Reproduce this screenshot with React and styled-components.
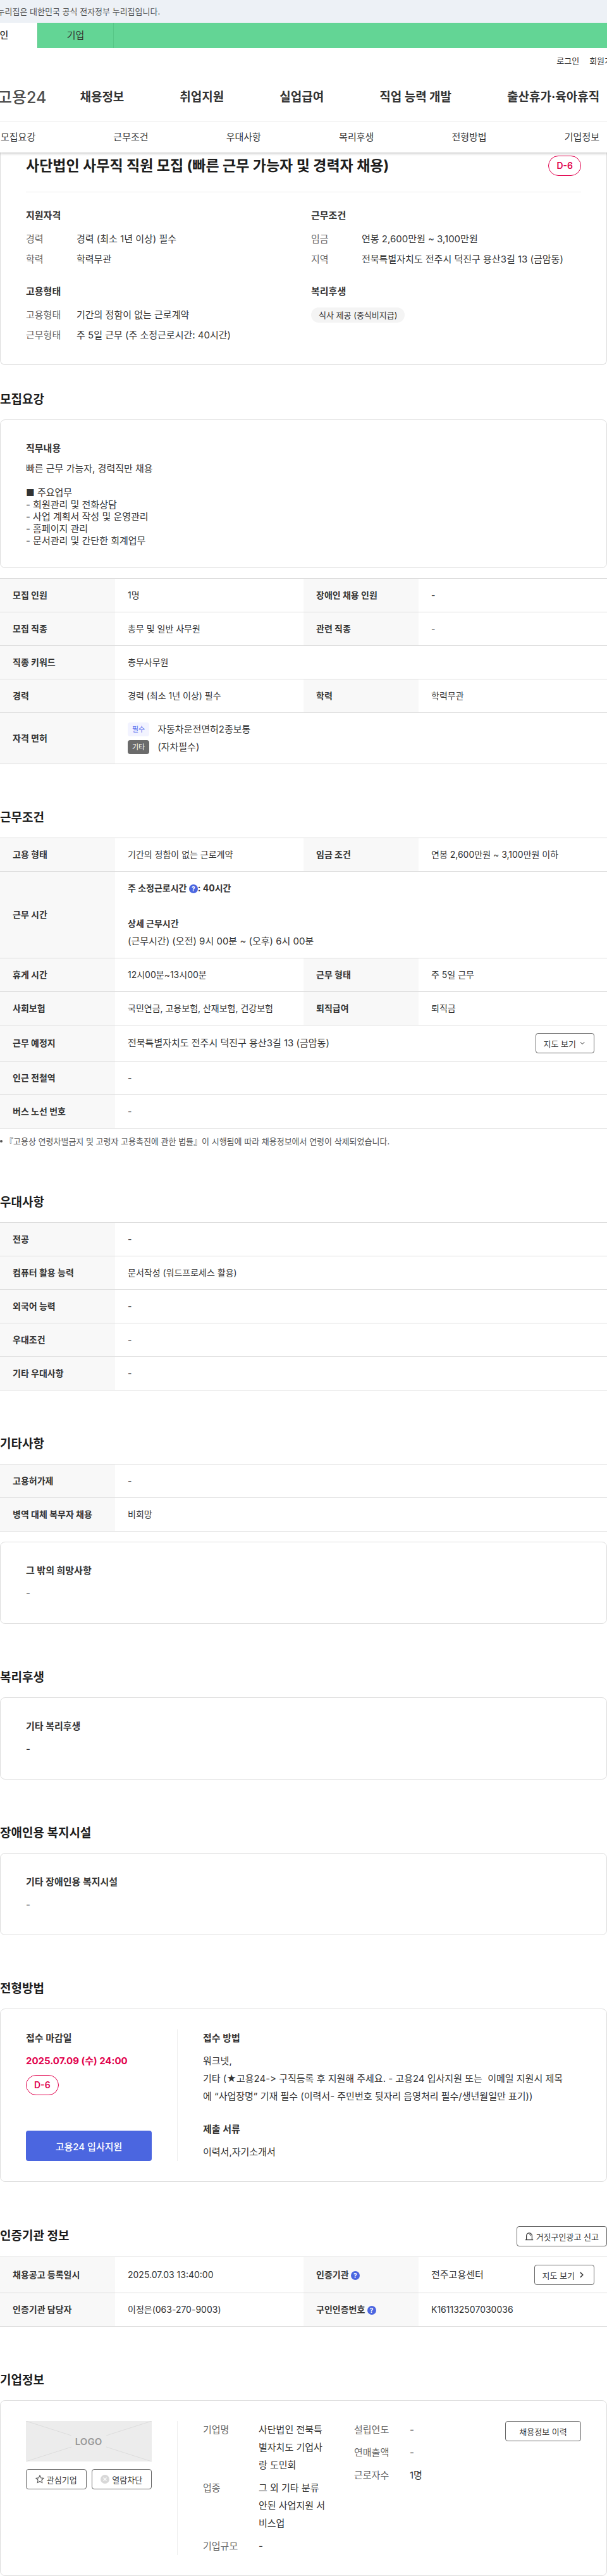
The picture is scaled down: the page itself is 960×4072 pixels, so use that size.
import * as React from "react"
import styled, { createGlobalStyle } from "styled-components";
import { ChevronDown, ChevronRight } from "lucide-react";

const topMenus = ["채용정보", "취업지원", "실업급여", "직업 능력 개발", "출산휴가·육아휴직"];
const anchors = ["모집요강", "근무조건", "우대사항", "복리후생", "전형방법", "기업정보"];

const jobText = `빠른 근무 가능자, 경력직만 채용

■ 주요업무
- 회원관리 및 전화상담
- 사업 계획서 작성 및 운영관리
- 홈페이지 관리
- 문서관리 및 간단한 회계업무`;

const applyText = `워크넷,
기타 (★고용24-> 구직등록 후 지원해 주세요. - 고용24 입사지원 또는  이메일 지원시 제목
에 “사업장명” 기재 필수 (이력서- 주민번호 뒷자리 음영처리 필수/생년월일만 표기))`;

const HelpIcon = () => (
    <HelpButton type="button" aria-label="도움말">?</HelpButton>
);

const SirenIcon = () => (
    <svg width="14" height="14" viewBox="0 0 14 14" fill="none" stroke="#333" strokeWidth="1.2">
        <path d="M2.6 12V6.2a4.4 4.4 0 0 1 8.8 0V12" />
        <path d="M0.8 12.6h12.4" />
        <path d="M7.4 4.2a2 2 0 0 1 1.6 2" />
    </svg>
);

const StarIcon = () => (
    <svg width="14" height="14" viewBox="0 0 14 14" fill="none" stroke="#555" strokeWidth="1.1">
        <path d="M7 1l1.8 3.9 4.2.5-3.1 2.9.8 4.2L7 10.4l-3.7 2.1.8-4.2L1 5.4l4.2-.5z" />
    </svg>
);

const BlockIcon = () => (
    <svg width="14" height="14" viewBox="0 0 14 14">
        <circle cx="7" cy="7" r="7" fill="#d8d8d8" />
        <path d="M4.5 4.5l5 5M9.5 4.5l-5 5" stroke="#fff" strokeWidth="1.2" />
    </svg>
);

const InfoTable = ({ rows }) => (
    <Table>
        <colgroup>
            <col className="head" />
            <col />
            <col className="head" />
            <col />
        </colgroup>
        <tbody>
            {rows.map((cells, i) => (
                <tr key={i}>
                    {cells.map(([label, value], j) => (
                        <React.Fragment key={j}>
                            <th scope="row">{label}</th>
                            <td colSpan={cells.length === 1 ? 3 : 1}>{value}</td>
                        </React.Fragment>
                    ))}
                </tr>
            ))}
        </tbody>
    </Table>
);

const Section = ({ title, action, first, children }) => (
    <SectionWrap $first={first}>
        <SectionHead>
            <h2>{title}</h2>
            {action}
        </SectionHead>
        {children}
    </SectionWrap>
);

const SummaryGroup = ({ title, items, children }) => (
    <div>
        <CardTitle $gap={13}>{title}</CardTitle>
        {items && (
            <SummaryList>
                {items.map(([label, value]) => (
                    <div key={label}>
                        <dt>{label}</dt>
                        <dd>{value}</dd>
                    </div>
                ))}
            </SummaryList>
        )}
        {children}
    </div>
);

const NoteCard = ({ title }) => (
    <Card>
        <CardTitle $gap={10}>{title}</CardTitle>
        <Paragraph>-</Paragraph>
    </Card>
);

const CompanyColumn = ({ items }) => (
    <CompanyList>
        {items.map(([label, value]) => (
            <div key={label}>
                <dt>{label}</dt>
                <dd>{value}</dd>
            </div>
        ))}
    </CompanyList>
);

const App = () => (
    <>
        <GlobalStyle />
        <Header>
            <GovBar>
                <svg width="32" height="16" viewBox="0 0 32 16">
                    <rect width="24" height="16" fill="#fff" />
                    <path d="M8 8a4 4 0 0 1 8 0" fill="#cd2e3a" />
                    <path d="M8 8a4 4 0 0 0 8 0" fill="#0047a0" />
                </svg>
                <span>이 누리집은 대한민국 공식 전자정부 누리집입니다.</span>
            </GovBar>
            <UserTabs>
                <UserTab href="#personal" $active>개인</UserTab>
                <UserTab href="#company">기업</UserTab>
            </UserTabs>
            <UtilLinks>
                <a href="#login">로그인</a>
                <a href="#join">회원가입</a>
            </UtilLinks>
            <MainNav>
                <Logo href="#home">
                    <svg width="48" height="32" viewBox="0 0 48 32">
                        <circle cx="16" cy="16" r="12" fill="none" stroke="#63d595" strokeWidth="5" />
                    </svg>
                    고용24
                </Logo>
                <ul>
                    {topMenus.map((menu) => (
                        <li key={menu}><a href="#menu">{menu}</a></li>
                    ))}
                </ul>
            </MainNav>
            <AnchorNav>
                {anchors.map((name) => (
                    <a key={name} href={`#${name}`}>{name}</a>
                ))}
            </AnchorNav>
        </Header>

        <main>
            <SummaryCard>
                <SummaryTop>
                    <h1>사단법인 사무직 직원 모집 (빠른 근무 가능자 및 경력자 채용)</h1>
                    <DayBadge>D-6</DayBadge>
                </SummaryTop>
                <SummaryGrid>
                    <SummaryGroup title="지원자격" items={[
                        ["경력", "경력 (최소 1년 이상) 필수"],
                        ["학력", "학력무관"],
                    ]} />
                    <SummaryGroup title="근무조건" items={[
                        ["임금", "연봉 2,600만원 ~ 3,100만원"],
                        ["지역", "전북특별자치도 전주시 덕진구 용산3길 13 (금암동)"],
                    ]} />
                    <SummaryGroup title="고용형태" items={[
                        ["고용형태", "기간의 정함이 없는 근로계약"],
                        ["근무형태", "주 5일 근무 (주 소정근로시간: 40시간)"],
                    ]} />
                    <SummaryGroup title="복리후생">
                        <Tag>식사 제공 (중식비지급)</Tag>
                    </SummaryGroup>
                </SummaryGrid>
            </SummaryCard>

            <Section title="모집요강" first>
                <Card>
                    <CardTitle $gap={10}>직무내용</CardTitle>
                    <JobText>{jobText}</JobText>
                </Card>
                <InfoTable rows={[
                    [["모집 인원", "1명"], ["장애인 채용 인원", "-"]],
                    [["모집 직종", "총무 및 일반 사무원"], ["관련 직종", "-"]],
                    [["직종 키워드", "총무사무원"]],
                    [["경력", "경력 (최소 1년 이상) 필수"], ["학력", "학력무관"]],
                    [["자격 면허", (
                        <>
                            <License><Flag>필수</Flag>자동차운전면허2종보통</License>
                            <License><Flag $dark>기타</Flag>(자차필수)</License>
                        </>
                    )]],
                ]} />
            </Section>

            <Section title="근무조건">
                <InfoTable rows={[
                    [["고용 형태", "기간의 정함이 없는 근로계약"], ["임금 조건", "연봉 2,600만원 ~ 3,100만원 이하"]],
                    [["근무 시간", (
                        <>
                            <HoursTitle>주 소정근로시간 <HelpIcon />: 40시간</HoursTitle>
                            <br />
                            <HoursTitle>상세 근무시간</HoursTitle>
                            <Paragraph>(근무시간) (오전) 9시 00분 ~ (오후) 6시 00분</Paragraph>
                        </>
                    )]],
                    [["휴게 시간", "12시00분~13시00분"], ["근무 형태", "주 5일 근무"]],
                    [["사회보험", "국민연금, 고용보험, 산재보험, 건강보험"], ["퇴직급여", "퇴직금"]],
                    [["근무 예정지", (
                        <CellRow>
                            전북특별자치도 전주시 덕진구 용산3길 13 (금암동)
                            <LineButton type="button">지도 보기<ChevronDown size={12} /></LineButton>
                        </CellRow>
                    )]],
                    [["인근 전철역", "-"]],
                    [["버스 노선 번호", "-"]],
                ]} />
                <Note>『고용상 연령차별금지 및 고령자 고용촉진에 관한 법률』이 시행됨에 따라 채용정보에서 연령이 삭제되었습니다.</Note>
            </Section>

            <Section title="우대사항">
                <InfoTable rows={[
                    [["전공", "-"]],
                    [["컴퓨터 활용 능력", "문서작성 (워드프로세스 활용)"]],
                    [["외국어 능력", "-"]],
                    [["우대조건", "-"]],
                    [["기타 우대사항", "-"]],
                ]} />
            </Section>

            <Section title="기타사항">
                <InfoTable rows={[
                    [["고용허가제", "-"]],
                    [["병역 대체 복무자 채용", "비희망"]],
                ]} />
                <NoteCard title="그 밖의 희망사항" />
            </Section>

            <Section title="복리후생">
                <NoteCard title="기타 복리후생" />
            </Section>

            <Section title="장애인용 복지시설">
                <NoteCard title="기타 장애인용 복지시설" />
            </Section>

            <Section title="전형방법">
                <SplitCard>
                    <Side>
                        <BlockTitle>접수 마감일</BlockTitle>
                        <Deadline>2025.07.09 (수) 24:00</Deadline>
                        <DayBadge>D-6</DayBadge>
                        <ApplyButton type="button">고용24 입사지원</ApplyButton>
                    </Side>
                    <Body>
                        <BlockTitle>접수 방법</BlockTitle>
                        <Paragraph>{applyText}</Paragraph>
                        <BlockTitle $spaced>제출 서류</BlockTitle>
                        <Paragraph>이력서,자기소개서</Paragraph>
                    </Body>
                </SplitCard>
            </Section>

            <Section
                title="인증기관 정보"
                action={<LineButton type="button"><SirenIcon />거짓구인광고 신고</LineButton>}
            >
                <InfoTable rows={[
                    [["채용공고 등록일시", "2025.07.03 13:40:00"], [<>인증기관 <HelpIcon /></>, (
                        <CellRow>
                            전주고용센터
                            <LineButton type="button">지도 보기<ChevronRight size={14} strokeWidth={3} /></LineButton>
                        </CellRow>
                    )]],
                    [["인증기관 담당자", "이정은(063-270-9003)"], [<>구인인증번호 <HelpIcon /></>, "K161132507030036"]],
                ]} />
            </Section>

            <Section title="기업정보">
                <SplitCard>
                    <Side>
                        <CompanyLogo viewBox="0 0 199 64" preserveAspectRatio="none">
                            <rect width="199" height="64" fill="#ececec" />
                            <path d="M0 0l72 23M199 0l-72 23M0 64l72-23M199 64l-72-23" stroke="#dcdcdc" />
                            <text x="99" y="38" textAnchor="middle">LOGO</text>
                        </CompanyLogo>
                        <ButtonPair>
                            <LineButton type="button"><StarIcon />관심기업</LineButton>
                            <LineButton type="button"><BlockIcon />열람차단</LineButton>
                        </ButtonPair>
                    </Side>
                    <CompanyBody>
                        <CompanyColumn items={[
                            ["기업명", "사단법인 전북특별자치도 기업사랑 도민회"],
                            ["업종", "그 외 기타 분류 안된 사업지원 서비스업"],
                            ["기업규모", "-"],
                        ]} />
                        <CompanyColumn items={[
                            ["설립연도", "-"],
                            ["연매출액", "-"],
                            ["근로자수", "1명"],
                        ]} />
                        <LineButton type="button">채용정보 이력</LineButton>
                    </CompanyBody>
                </SplitCard>
            </Section>
        </main>
    </>
);

export default App

const GlobalStyle = createGlobalStyle`
  * {
    box-sizing: border-box;
  }

  body {
    margin: 0;
    background: #fff;
    color: #333;
    font-family: Inter, "Noto Sans CJK KR", sans-serif;
    font-size: 15px;
    line-height: 24px;
    overflow-x: hidden;
  }

  h1, h2, h3, p, ul, dl, dd {
    margin: 0;
    padding: 0;
  }

  a {
    color: inherit;
    text-decoration: none;
  }

  button {
    font-family: inherit;
    color: inherit;
    cursor: pointer;
  }
`

const Header = styled.header`
  position: relative;
  z-index: 1;
  background: #fff;
  box-shadow: 0 2px 4px rgba(0, 0, 0, 0.2);
`

const GovBar = styled.div`
  display: flex;
  align-items: center;
  gap: 8px;
  height: 36px;
  margin-left: -60px;
  background: #edf1f6;
  color: #555;
  font-size: 13px;
`

const UserTabs = styled.div`
  display: flex;
  height: 40px;
  margin-left: -60px;
  background: #63d595;
`

const UserTab = styled.a`
  display: flex;
  align-items: center;
  justify-content: center;
  width: 120px;
  border-right: 1px solid #57c787;
  background: ${(props) => (props.$active ? "#fff" : "transparent")};
  font-weight: ${(props) => (props.$active ? 500 : 400)};
`

const UtilLinks = styled.div`
  display: flex;
  justify-content: flex-end;
  gap: 16px;
  margin-right: -20px;
  padding: 8px 0;
  font-size: 13px;
`

const MainNav = styled.nav`
  display: flex;
  align-items: center;
  height: 77px;
  margin-left: -60px;
  padding-bottom: 1px;
  border-bottom: 1px solid #eee;

  ul {
    display: flex;
    gap: 88px;
    margin-left: 53px;
    list-style: none;
    font-size: 19px;
    font-weight: 700;
    white-space: nowrap;
  }
`

const Logo = styled.a`
  display: flex;
  align-items: center;
  gap: 8px;
  color: #4d4d4d;
  font-size: 25px;
  font-weight: 500;
`

const AnchorNav = styled.nav`
  display: flex;
  justify-content: space-between;
  align-items: center;
  height: 48px;
  padding: 0 12px 0 1px;
`

const Card = styled.div`
  padding: 33px 40px;
  border: 1px solid #ddd;
  border-radius: 8px;
`

const SummaryCard = styled(Card)`
  padding-top: 5px;
  padding-bottom: 34px;
  border-top: 0;
  border-radius: 0 0 8px 8px;
`

const SummaryTop = styled.div`
  display: flex;
  justify-content: space-between;
  align-items: center;
  padding-bottom: 25px;
  border-bottom: 1px solid #eee;

  h1 {
    color: #1d1d1d;
    font-size: 23px;
    line-height: 32px;
  }
`

const DayBadge = styled.span`
  display: inline-flex;
  align-items: center;
  align-self: flex-start;
  height: 32px;
  padding: 0 12px;
  border: 1px solid #e1004c;
  border-radius: 16px;
  color: #e1004c;
  font-size: 14px;
  font-weight: 600;
`

const SummaryGrid = styled.div`
  display: grid;
  grid-template-columns: 1fr 1fr;
  gap: 27px 24px;
  padding-top: 25px;
`

const CardTitle = styled.h3`
  margin-bottom: ${(props) => props.$gap}px;
  font-size: 15px;
  font-weight: 700;
`

const SummaryList = styled.dl`
  display: grid;
  gap: 8px;

  div {
    display: flex;
  }

  dt {
    width: 80px;
    color: #666;
  }
`

const Tag = styled.span`
  display: inline-block;
  padding: 0 12px;
  border-radius: 12px;
  background: #f4f4f4;
  font-size: 13px;
`

const SectionWrap = styled.section`
  margin-top: ${(props) => (props.$first ? 40 : 70)}px;
`

const SectionHead = styled.div`
  display: flex;
  justify-content: space-between;
  align-items: center;
  margin-bottom: 16px;

  h2 {
    color: #1d1d1d;
    font-size: 19px;
    line-height: 30px;
  }
`

const JobText = styled.p`
  line-height: 19px;
  white-space: pre-line;
`

const Paragraph = styled.p`
  font-size: 15px;
  line-height: 28px;
  white-space: pre-wrap;
`

const Table = styled.table`
  width: 100%;
  border-top: 1px solid #ddd;
  border-spacing: 0;
  table-layout: fixed;
  font-size: 14px;
  line-height: 28px;

  ${Card} + & {
    margin-top: 16px;
  }

  & + ${Card} {
    margin-top: 16px;
  }

  .head {
    width: 182px;
  }

  th, td {
    padding: 12px 20px;
    border-bottom: 1px solid #ddd;
    text-align: left;
    vertical-align: middle;
  }

  th {
    background: #f8f8f8;
    font-weight: 700;
    white-space: nowrap;
  }
`

const License = styled.div`
  display: flex;
  align-items: center;
  gap: 13px;
  font-size: 15px;
`

const Flag = styled.span`
  padding: 0 7px;
  border-radius: 4px;
  background: ${(props) => (props.$dark ? "#6b6b6b" : "#f2f3ff")};
  color: ${(props) => (props.$dark ? "#fff" : "#5c70ee")};
  font-size: 11px;
  line-height: 22px;
`

const HoursTitle = styled.div`
  font-weight: 700;
`

const HelpButton = styled.button`
  width: 14px;
  height: 14px;
  padding: 0;
  border: 0;
  border-radius: 50%;
  background: #4b66e0;
  color: #fff;
  font-size: 10px;
  font-weight: 700;
  line-height: 14px;
`

const CellRow = styled.div`
  display: flex;
  justify-content: space-between;
  align-items: center;
  font-size: 15px;
`

const LineButton = styled.button`
  display: inline-flex;
  align-items: center;
  justify-content: center;
  gap: 4px;
  height: 32px;
  padding: 0 12px;
  border: 1px solid #666;
  border-radius: 4px;
  background: #fff;
  font-size: 13px;
  white-space: nowrap;

  svg {
    flex-shrink: 0;
  }
`

const Note = styled.p`
  display: flex;
  align-items: center;
  gap: 4px;
  margin-top: 8px;
  color: #555;
  font-size: 13px;

  &::before {
    content: "";
    width: 4px;
    height: 4px;
    border-radius: 50%;
    background: #555;
  }
`

const SplitCard = styled(Card)`
  display: grid;
  grid-template-columns: 240px 1fr;
  padding: 32px 40px;
`

const Side = styled.div`
  display: flex;
  flex-direction: column;
  padding-right: 40px;
  border-right: 1px solid #eee;
`

const Body = styled.div`
  padding-left: 40px;
`

const BlockTitle = styled.h3`
  margin: ${(props) => (props.$spaced ? 24 : 0)}px 0 8px;
  font-size: 15px;
  font-weight: 700;
  line-height: 28px;
`

const Deadline = styled.strong`
  margin-bottom: 8px;
  color: #e1004c;
  line-height: 28px;
`

const ApplyButton = styled.button`
  height: 48px;
  margin-top: auto;
  border: 0;
  border-radius: 4px;
  background: #4b66e0;
  color: #fff;
  font-size: 15px;
  font-weight: 500;
`

const CompanyLogo = styled.svg`
  width: 100%;
  height: 64px;

  text {
    fill: #999;
    font-size: 15px;
    font-weight: 600;
  }
`

const ButtonPair = styled.div`
  display: grid;
  grid-template-columns: 1fr 1fr;
  gap: 8px;
  margin-top: 12px;

  ${LineButton} {
    padding: 0;
  }
`

const CompanyBody = styled(Body)`
  display: grid;
  grid-template-columns: 1fr 1fr 120px;
  align-items: start;
  gap: 40px;
`

const CompanyList = styled.dl`
  display: grid;
  gap: 8px;
  line-height: 28px;

  div {
    display: grid;
    grid-template-columns: 88px 1fr;
  }

  dt {
    color: #666;
  }

  dd {
    word-break: break-all;
  }
`
